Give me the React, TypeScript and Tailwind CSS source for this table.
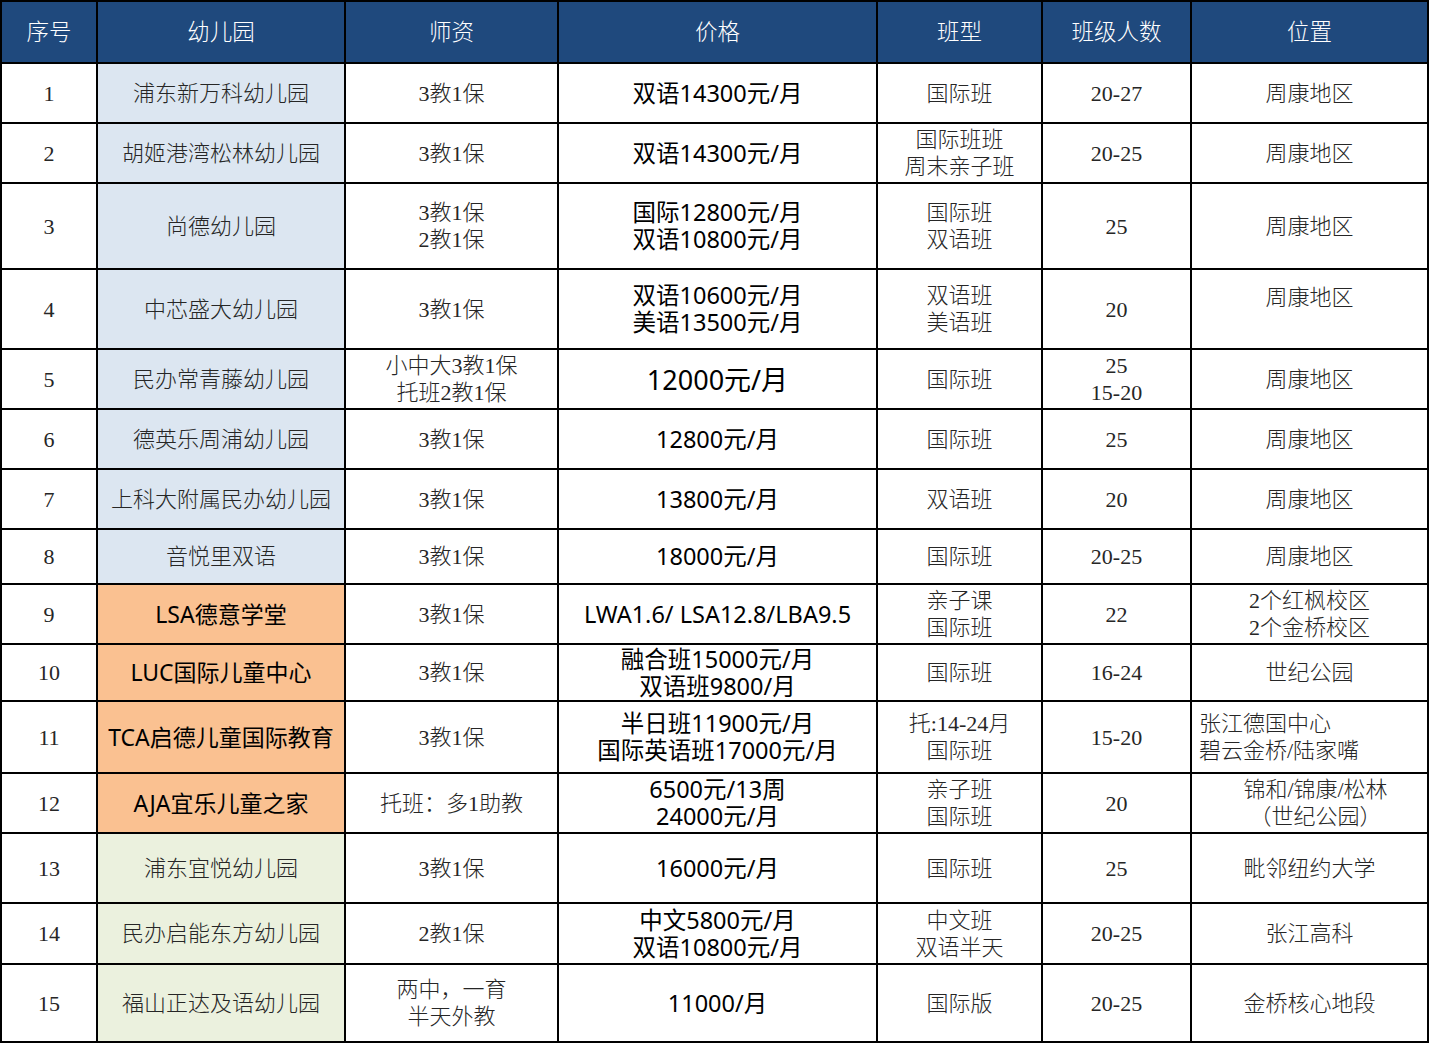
const SERIF = "font-['Liberation_Serif','Noto_Sans_CJK_SC',serif]";
const SANS = "font-['Noto_Sans','Noto_Sans_CJK_SC',sans-serif]";

type Row = {
  no: number;
  name: string;
  tone: "blue" | "orange" | "green";
  teacher: string[];
  price: string[];
  priceBig?: boolean;
  kind: string[];
  size: string[];
  loc: string[];
  locClass?: string;
  h: string;
};

const rows: Row[] = [
  { no: 1, name: "浦东新万科幼儿园", tone: "blue", teacher: ["3教1保"], price: ["双语14300元/月"], kind: ["国际班"], size: ["20-27"], loc: ["周康地区"], h: "h-[60px]" },
  { no: 2, name: "胡姬港湾松林幼儿园", tone: "blue", teacher: ["3教1保"], price: ["双语14300元/月"], kind: ["国际班班", "周末亲子班"], size: ["20-25"], loc: ["周康地区"], h: "h-[60px]" },
  { no: 3, name: "尚德幼儿园", tone: "blue", teacher: ["3教1保", "2教1保"], price: ["国际12800元/月", "双语10800元/月"], kind: ["国际班", "双语班"], size: ["25"], loc: ["周康地区"], h: "h-[86px]" },
  { no: 4, name: "中芯盛大幼儿园", tone: "blue", teacher: ["3教1保"], price: ["双语10600元/月", "美语13500元/月"], kind: ["双语班", "美语班"], size: ["20"], loc: ["周康地区"], locClass: "pb-[24px]", h: "h-[80px]" },
  { no: 5, name: "民办常青藤幼儿园", tone: "blue", teacher: ["小中大3教1保", "托班2教1保"], price: ["12000元/月"], priceBig: true, kind: ["国际班"], size: ["25", "15-20"], loc: ["周康地区"], h: "h-[60px]" },
  { no: 6, name: "德英乐周浦幼儿园", tone: "blue", teacher: ["3教1保"], price: ["12800元/月"], kind: ["国际班"], size: ["25"], loc: ["周康地区"], h: "h-[60px]" },
  { no: 7, name: "上科大附属民办幼儿园", tone: "blue", teacher: ["3教1保"], price: ["13800元/月"], kind: ["双语班"], size: ["20"], loc: ["周康地区"], h: "h-[60px]" },
  { no: 8, name: "音悦里双语", tone: "blue", teacher: ["3教1保"], price: ["18000元/月"], kind: ["国际班"], size: ["20-25"], loc: ["周康地区"], h: "h-[55px]" },
  { no: 9, name: "LSA德意学堂", tone: "orange", teacher: ["3教1保"], price: ["LWA1.6/ LSA12.8/LBA9.5"], kind: ["亲子课", "国际班"], size: ["22"], loc: ["2个红枫校区", "2个金桥校区"], h: "h-[60px]" },
  { no: 10, name: "LUC国际儿童中心", tone: "orange", teacher: ["3教1保"], price: ["融合班15000元/月", "双语班9800/月"], kind: ["国际班"], size: ["16-24"], loc: ["世纪公园"], h: "h-[57px]" },
  { no: 11, name: "TCA启德儿童国际教育", tone: "orange", teacher: ["3教1保"], price: ["半日班11900元/月", "国际英语班17000元/月"], kind: ["托:14-24月", "国际班"], size: ["15-20"], loc: ["张江德国中心", "碧云金桥/陆家嘴"], locClass: "text-left pl-[7px]", h: "h-[72px]" },
  { no: 12, name: "AJA宜乐儿童之家", tone: "orange", teacher: ["托班：多1助教"], price: ["6500元/13周", "24000元/月"], kind: ["亲子班", "国际班"], size: ["20"], loc: ["锦和/锦康/松林", "（世纪公园）"], locClass: "pl-[12px]", h: "h-[60px]" },
  { no: 13, name: "浦东宜悦幼儿园", tone: "green", teacher: ["3教1保"], price: ["16000元/月"], kind: ["国际班"], size: ["25"], loc: ["毗邻纽约大学"], h: "h-[70px]" },
  { no: 14, name: "民办启能东方幼儿园", tone: "green", teacher: ["2教1保"], price: ["中文5800元/月", "双语10800元/月"], kind: ["中文班", "双语半天"], size: ["20-25"], loc: ["张江高科"], h: "h-[61px]" },
  { no: 15, name: "福山正达及语幼儿园", tone: "green", teacher: ["两中，一育", "半天外教"], price: ["11000/月"], kind: ["国际版"], size: ["20-25"], loc: ["金桥核心地段"], h: "h-[78px]" },
];

const toneBg = {
  blue: "bg-[#dce6f1]",
  orange: "bg-[#fac191]",
  green: "bg-[#ebf1de]",
};

const Lines = ({ lines }: { lines: string[] }) => (
  <>
    {lines.map((l, i) => (
      <div key={i}>{l}</div>
    ))}
  </>
);

const cell = "border-2 border-black text-center align-middle p-0";
const serifCell = `${cell} ${SERIF} font-light text-[22px] leading-[27px] text-[#262626] whitespace-nowrap`;

export default function App() {
  const heads = ["序号", "幼儿园", "师资", "价格", "班型", "班级人数", "位置"];
  return (
    <div className="bg-white w-[1430px] h-[1044px] overflow-hidden">
      <table className="table-fixed border-collapse w-[1427px]">
        <colgroup>
          <col className="w-[96px]" />
          <col className="w-[248px]" />
          <col className="w-[213px]" />
          <col className="w-[319px]" />
          <col className="w-[165px]" />
          <col className="w-[149px]" />
          <col className="w-[237px]" />
        </colgroup>
        <thead>
          <tr className="h-[62px] bg-[#1f497d]">
            {heads.map((h) => (
              <th key={h} className={`${cell} ${SERIF} font-light text-white text-[22.5px] leading-[27px]`}>
                {h}
              </th>
            ))}
          </tr>
        </thead>
        <tbody>
          {rows.map((r) => (
            <tr key={r.no} className={r.h}>
              <td className={serifCell}>{r.no}</td>
              <td
                className={
                  r.tone === "orange"
                    ? `${cell} ${toneBg[r.tone]} ${SANS} text-[23px] leading-[27px] text-black whitespace-nowrap`
                    : `${serifCell} ${toneBg[r.tone]}`
                }
              >
                {r.name}
              </td>
              <td className={serifCell}>
                <Lines lines={r.teacher} />
              </td>
              <td
                className={`${cell} ${SANS} ${
                  r.priceBig ? "text-[27px]" : "text-[23.5px]"
                } leading-[27px] text-black whitespace-nowrap`}
              >
                <Lines lines={r.price} />
              </td>
              <td className={serifCell}>
                <Lines lines={r.kind} />
              </td>
              <td className={serifCell}>
                <Lines lines={r.size} />
              </td>
              <td className={`${serifCell} ${r.locClass ?? ""}`}>
                <Lines lines={r.loc} />
              </td>
            </tr>
          ))}
        </tbody>
      </table>
    </div>
  );
}
